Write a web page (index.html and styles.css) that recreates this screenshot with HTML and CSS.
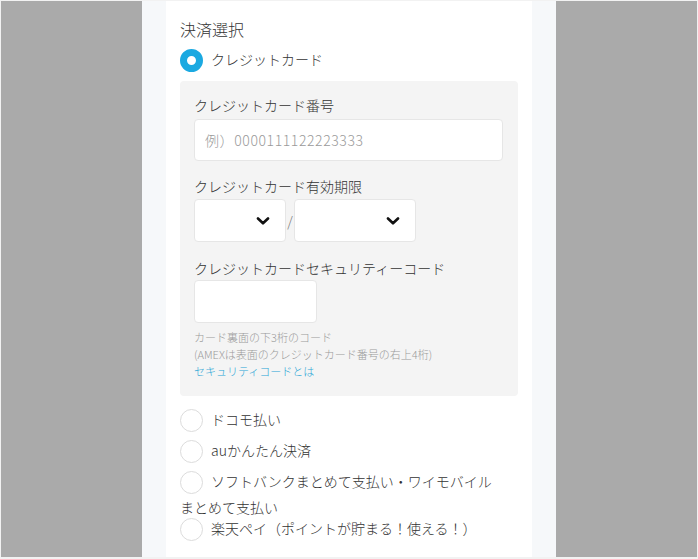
FILE: index.html
```html
<!DOCTYPE html>
<html lang="ja">
<head>
<meta charset="utf-8">
<title>決済選択</title>
<link rel="stylesheet" href="styles.css">
</head>
<body>
<div class="frame">
  <div class="page">
    <div class="column">
      <div class="card">
        <h2 class="title">決済選択</h2>
        <div class="option option-first"><span class="radio checked"></span>クレジットカード</div>
        <div class="panel">
          <div class="field-label">クレジットカード番号</div>
          <input class="text-input card-number" type="text" placeholder="例）0000111122223333">
          <div class="field-label label-gap">クレジットカード有効期限</div>
          <div class="expiry">
            <div class="select month">
              <svg class="chevron" width="14" height="8" viewBox="0 0 14 8"><path d="M2 1.5 L7 6.3 L12 1.5" fill="none" stroke="#111" stroke-width="2.6" stroke-linecap="round" stroke-linejoin="round"/></svg>
            </div>
            <span class="slash">/</span>
            <div class="select year">
              <svg class="chevron" width="14" height="8" viewBox="0 0 14 8"><path d="M2 1.5 L7 6.3 L12 1.5" fill="none" stroke="#111" stroke-width="2.6" stroke-linecap="round" stroke-linejoin="round"/></svg>
            </div>
          </div>
          <div class="field-label label-gap2">クレジットカードセキュリティーコード</div>
          <input class="text-input cvc" type="text">
          <div class="note">
            <div>カード裏面の下3桁のコード</div>
            <div>(AMEXは表面のクレジットカード番号の右上4桁)</div>
            <div class="note-link">セキュリティコードとは</div>
          </div>
        </div>
        <div class="options">
          <div class="option"><span class="radio"></span>ドコモ払い</div>
          <div class="option"><span class="radio"></span>auかんたん決済</div>
          <div class="option"><span class="radio"></span>ソフトバンクまとめて支払い・ワイモバイル<br>まとめて支払い</div>
          <div class="option"><span class="radio"></span>楽天ペイ（ポイントが貯まる！使える！）</div>
        </div>
      </div>
    </div>
  </div>
</div>
</body>
</html>
```

FILE: styles.css
```css
* { box-sizing: border-box; }

html, body {
  margin: 0;
  padding: 0;
  width: 698px;
  height: 559px;
  overflow: hidden;
  background: #f2f2f2;
  font-family: "Noto Sans CJK JP", "Noto Sans", sans-serif;
  font-weight: 300;
  color: #333;
}

.frame {
  padding: 1px 1px 2px 1px;
  height: 559px;
}

.page {
  height: 556px;
  background: #aaaaaa;
  display: flex;
  justify-content: center;
  overflow: hidden;
}

.column {
  width: 414px;
  height: 100%;
  padding: 0 24px;
  background: #f6f8fa;
}

.card {
  height: 100%;
  background: #ffffff;
  padding: 0 14px;
}

.title {
  margin: 0;
  padding-top: 16px;
  font-size: 16px;
  font-weight: 300;
  line-height: 24px;
  color: #333;
}

.option {
  font-size: 14px;
  line-height: 16px;
  color: #333;
}

.option-first {
  margin-top: 5px;
}

.radio {
  display: inline-block;
  width: 23px;
  height: 23px;
  margin: 4px 8px 4px 0;
  border: 1px solid #dcdcdc;
  border-radius: 50%;
  background: #fff;
  vertical-align: middle;
  position: relative;
  top: -1px;
}

.radio.checked {
  border: 7px solid #1ba9e1;
  background: #fff;
}

.panel {
  margin-top: 4px;
  background: #f4f4f4;
  border-radius: 4px;
  padding: 14px 15px 16px 14px;
}

.field-label {
  font-size: 14px;
  line-height: 20px;
  color: #333;
}

.label-gap { margin-top: 15px; }
.label-gap2 { margin-top: 16px; }

.text-input {
  display: block;
  margin-top: 4px;
  height: 42px;
  width: 100%;
  border: 1px solid #e6e6e6;
  border-radius: 4px;
  background: #fff;
  padding: 0 10px;
  font-family: "Noto Sans CJK JP", "Noto Sans", sans-serif;
  font-weight: 300;
  font-size: 14px;
  color: #333;
  outline: none;
}

.text-input::placeholder {
  color: #9a9a9a;
  letter-spacing: 0.6px;
}

.cvc {
  width: 123px;
  height: 43px;
  margin-top: 2px;
}

.expiry {
  margin-top: 3px;
  display: flex;
  align-items: center;
}

.select {
  position: relative;
  height: 43px;
  background: #fff;
  border: 1px solid #e6e6e6;
  border-radius: 4px;
}

.month { width: 92px; }
.year { width: 122px; }

.chevron {
  position: absolute;
  right: 15px;
  top: 50%;
  margin-top: -4px;
}

.slash {
  width: 8px;
  text-align: center;
  font-size: 14px;
  color: #777;
  line-height: 20px;
}

.note {
  margin-top: 6px;
  font-size: 11px;
  line-height: 17px;
  color: #9a9a9a;
}

.note-link {
  color: #2ba6d6;
}

.options {
  margin-top: 10px;
}
```
